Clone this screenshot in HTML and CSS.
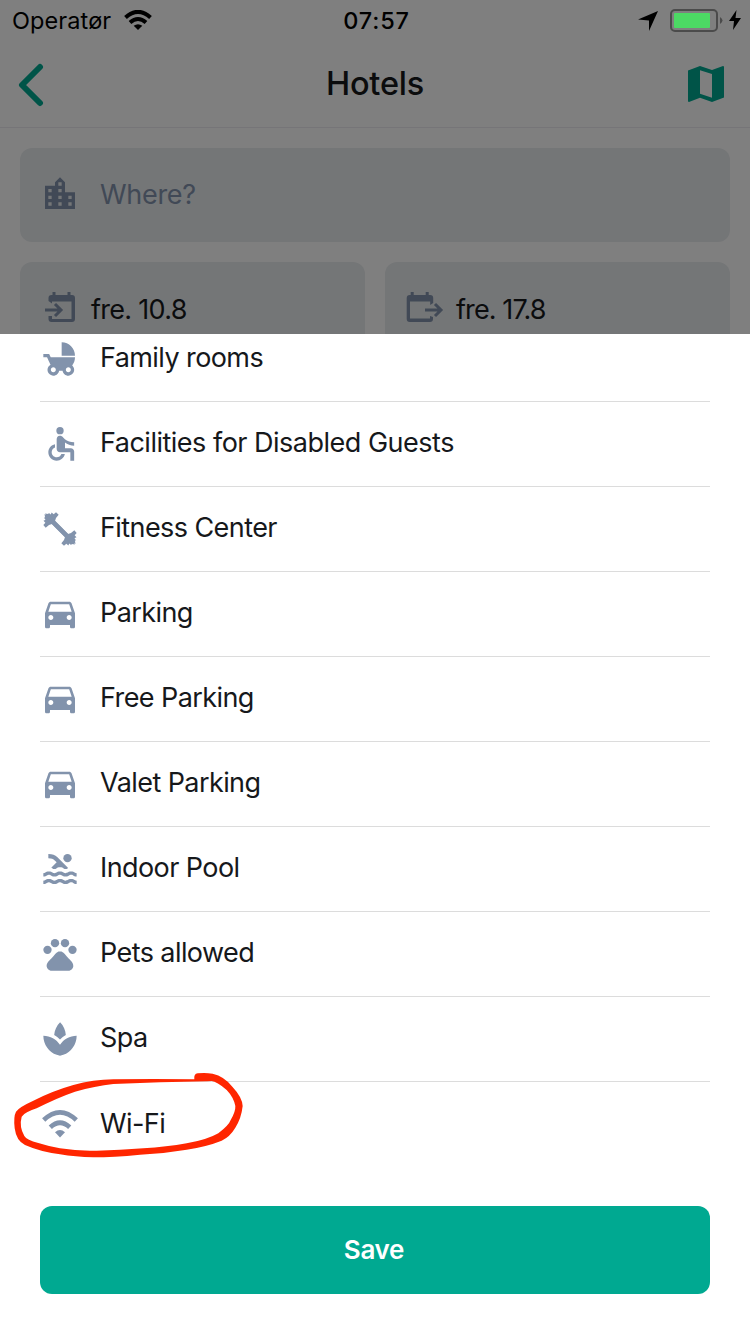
FILE: index.html
```html
<!DOCTYPE html>
<html lang="en">
<head>
<meta charset="utf-8">
<title>Hotels</title>
<link rel="stylesheet" href="styles.css">
</head>
<body>
<svg width="0" height="0" class="defs">
  <symbol id="car" viewBox="0 0 24 24"><path d="M18.92 5.01C18.72 4.42 18.16 4 17.5 4h-11c-.66 0-1.21.42-1.42 1.01L3 11v8c0 .55.45 1 1 1h1c.55 0 1-.45 1-1v-1h12v1c0 .55.45 1 1 1h1c.55 0 1-.45 1-1v-8l-2.08-5.99zM6.5 15c-.83 0-1.5-.67-1.5-1.5S5.67 12 6.5 12s1.5.67 1.5 1.5S7.33 15 6.5 15zm11 0c-.83 0-1.5-.67-1.5-1.5s.67-1.5 1.5-1.5 1.5.67 1.5 1.5-.67 1.5-1.5 1.5zM5 10l1.5-4.5h11L19 10H5z"/></symbol>
</svg>
<div class="screen">
  <main class="page">
    <header class="nav">
      <svg class="back" viewBox="0 0 30 46"><path d="M24 6L6 24l18 18"/></svg>
      <h1 class="title">Hotels</h1>
      <svg class="map" viewBox="0 0 36 36"><path fill-rule="evenodd" d="M0 4.500L12 0l12 4 11-4q1 0 1 1v30.500L24 36l-12-4.200L1 36q-1 0-1-1zM12 4.200v23.600l12 4V8z"/></svg>
    </header>
    <section class="search">
      <div class="field where">
        <svg class="icon" viewBox="0 0 24 24"><path d="M15 11V5l-3-3-3 3v2H3v14h18V11h-6zm-8 8H5v-2h2v2zm0-4H5v-2h2v2zm0-4H5V9h2v2zm6 8h-2v-2h2v2zm0-4h-2v-2h2v2zm0-4h-2V9h2v2zm0-4h-2V5h2v2zm6 12h-2v-2h2v2zm0-4h-2v-2h2v2z"/></svg>
        <span class="placeholder">Where?</span>
      </div>
      <div class="dates">
        <div class="field date">
          <svg class="cal" viewBox="0 0 40 34"><path d="M8.500 10V7q0-3 3-3h1V1h3v3h12V1h3v3h1.500q3 0 3 3v21q0 3-3 3h-20.500q-3 0-3-3v-3h3.500v3h19.500V10.500H12v2z"/><path class="line" d="M5 19h16M15 13l6 6-6 6"/></svg>
          <span class="day">fre. 10.8</span>
        </div>
        <div class="field date">
          <svg class="cal" viewBox="0 0 40 34"><path d="M1.700 7q0-3 3-3h1V1h3v3h12V1h3v3h1.500q3 0 3 3v5l-3 2v-3.500H5v17h20V25l3 1v2q0 3-3 3H4.700q-3 0-3-3z"/><path class="line" d="M20 19h16M30 13l6 6-6 6"/></svg>
          <span class="day out">fre. 17.8</span>
        </div>
      </div>
    </section>
  </main>
  <div class="dim"></div>
  <div class="status">
    <div class="carrier"><span class="operator">Operatør</span>
      <svg class="signal" viewBox="0 0 28 20"><path class="arc" d="M1.500 7.500Q14-3.800 26.500 7.500M6 12.500Q14 5.500 22 12.500"/><path d="M9.700 15.800Q14 12.500 18.300 15.800L14 20z"/></svg>
    </div>
    <span class="clock">07:57</span>
    <div class="power">
      <svg class="locate" viewBox="0 0 20 20"><path d="M20 0L11 20V9.500L0 8.500z"/></svg>
      <svg class="battery" viewBox="0 0 54 24"><rect class="shell" x="1" y="1" width="46" height="21" rx="4"/><rect class="charge" x="4" y="4" width="36" height="15" rx="1"/><path class="tip" d="M50 8q5 3.500 0 7z"/></svg>
      <svg class="bolt" viewBox="0 0 12 20"><path d="M7.500 0L0 11h5L4 20l8-12H6.500z"/></svg>
    </div>
  </div>
  <section class="sheet">
    <ul class="list">
      <li class="row"><svg class="icon" viewBox="0 0 24 24"><path d="M13 2v8h8c0-4.420-3.580-8-8-8zm6.320 13.890C20.370 14.540 21 12.840 21 11H6.440l-.95-2H2v2h2.220s1.890 4.070 2.120 4.420c-1.100.59-1.840 1.750-1.840 3.080C4.500 20.430 6.070 22 8 22c1.760 0 3.220-1.300 3.460-3h2.080c.24 1.700 1.700 3 3.460 3 1.930 0 3.500-1.570 3.500-3.500 0-1.040-.46-1.970-1.180-2.610zM8 20c-.83 0-1.500-.67-1.500-1.500S7.170 17 8 17s1.500.67 1.500 1.500S8.830 20 8 20zm9 0c-.83 0-1.500-.67-1.500-1.500s.67-1.500 1.500-1.500 1.500.67 1.500 1.500-.67 1.500-1.500 1.500z"/></svg><span class="label">Family rooms</span></li>
      <li class="row"><svg class="icon" viewBox="0 0 24 24"><circle cx="12" cy="4" r="2.200"/><path d="M20.500 13v-2c-2 .02-4.200-.75-5.570-1.830l-1.290-1.430c-.17-.19-.38-.34-.61-.45H13c-.35-.2-.75-.3-1.190-.26C10.760 7.110 10 8.040 10 9.090V15c0 1.100.9 2 2 2h6.200v5h2.300v-5.500c0-1.100-.9-2-2-2H15v-3.450c1.290 1.070 3.500 1.940 5.500 1.950zM12.830 18c-.41 1.160-1.520 2-2.830 2-1.660 0-3-1.340-3-3 0-1.310.84-2.410 2-2.830V12.100c-2.280.46-4 2.480-4 4.900 0 2.760 2.240 5 5 5 2.420 0 4.440-1.720 4.900-4h-2.070z"/></svg><span class="label wide">Facilities for Disabled Guests</span></li>
      <li class="row"><svg class="icon" viewBox="0 0 24 24"><path d="M3.400 3.400L3.200 2.600 4.300 3 5.600 2.600l.8.700.6-1.200 1.200 1.100L9.600 2l1.600 1.400-1.600 2L9 7.200l7.800 7.800 1.800-.6 2-1.600 1.400 1.600-1.200 1.400 1.100 1.200-1.200.6.700.8-.4 1.300.4 1.100-.8-.2z"/><path transform="matrix(0 1 1 0 0 0)" d="M3.400 3.400L3.200 2.600 4.300 3 5.600 2.600l.8.700.6-1.200 1.200 1.100L9.600 2l1.600 1.400-1.600 2L9 7.200l7.800 7.800 1.800-.6 2-1.600 1.400 1.600-1.200 1.400 1.100 1.200-1.200.6.700.8-.4 1.300.4 1.100-.8-.2z"/><path d="M3.300 3.300h2l15.400 15.400v2h-2L3.300 5.300z"/></svg><span class="label">Fitness Center</span></li>
      <li class="row"><svg class="icon car"><use href="#car"/></svg><span class="label">Parking</span></li>
      <li class="row"><svg class="icon car"><use href="#car"/></svg><span class="label">Free Parking</span></li>
      <li class="row"><svg class="icon car"><use href="#car"/></svg><span class="label">Valet Parking</span></li>
      <li class="row"><svg class="icon" viewBox="0 0 24 24"><path d="M22 21c-1.110 0-1.730-.37-2.180-.64-.37-.22-.6-.36-1.150-.36-.56 0-.78.13-1.150.36-.46.27-1.070.64-2.180.64s-1.730-.37-2.180-.64c-.37-.22-.6-.36-1.150-.36-.56 0-.78.13-1.150.36-.46.27-1.080.64-2.190.64-1.110 0-1.730-.37-2.180-.64-.37-.23-.6-.36-1.150-.36s-.78.13-1.150.36c-.46.27-1.080.64-2.190.64v-2c.56 0 .78-.13 1.150-.36.46-.27 1.080-.64 2.190-.64s1.730.37 2.180.64c.37.23.59.36 1.150.36.56 0 .78-.13 1.150-.36.46-.27 1.080-.64 2.190-.64 1.110 0 1.730.37 2.180.64.37.22.6.36 1.150.36s.78-.13 1.150-.36c.45-.27 1.070-.64 2.180-.64s1.730.37 2.180.64c.37.23.59.36 1.150.36v2zm0-4.500c-1.110 0-1.730-.37-2.180-.64-.37-.22-.6-.36-1.150-.36-.56 0-.78.13-1.150.36-.45.27-1.070.64-2.180.64s-1.730-.37-2.180-.64c-.37-.22-.6-.36-1.150-.36-.56 0-.78.13-1.150.36-.45.27-1.070.64-2.180.64s-1.730-.37-2.180-.64c-.37-.22-.6-.36-1.150-.36s-.78.13-1.150.36c-.47.27-1.090.64-2.200.64v-2c.56 0 .78-.13 1.150-.36.45-.27 1.070-.64 2.180-.64s1.730.37 2.180.64c.37.22.6.36 1.150.36.56 0 .78-.13 1.150-.36.45-.27 1.070-.64 2.180-.64s1.730.37 2.180.64c.37.22.6.36 1.150.36s.78-.13 1.150-.36c.45-.27 1.070-.64 2.180-.64s1.730.37 2.180.64c.37.22.6.36 1.150.36v2zM8.670 12c.56 0 .78-.13 1.150-.36.46-.27 1.080-.64 2.190-.64 1.110 0 1.730.37 2.180.64.37.22.6.36 1.150.36s.78-.13 1.150-.36c.12-.07.26-.15.41-.23L10.480 5C8.930 3.450 7.500 2.990 5 3v2.500c1.820-.01 2.890.39 4 1.500l1 1-3.250 3.250c.31.12.56.27.77.39.37.23.59.36 1.150.36z"/><circle cx="16.500" cy="5.500" r="2.500"/></svg><span class="label">Indoor Pool</span></li>
      <li class="row"><svg class="icon" viewBox="0 0 24 24"><circle cx="4.500" cy="9.500" r="2.500"/><circle cx="9" cy="5.500" r="2.500"/><circle cx="15" cy="5.500" r="2.500"/><circle cx="19.500" cy="9.500" r="2.500"/><path d="M17.340 14.860c-.87-1.020-1.600-1.890-2.480-2.910-.46-.54-1.050-1.080-1.750-1.320-.11-.04-.22-.07-.33-.09-.25-.04-.52-.04-.78-.04s-.53 0-.79.05c-.11.02-.22.05-.33.09-.7.24-1.280.78-1.750 1.320-.87 1.020-1.600 1.890-2.480 2.910-1.310 1.310-2.920 2.760-2.620 4.790.29 1.020 1.020 2.030 2.330 2.320h11.260c1.310-.29 2.040-1.310 2.330-2.320.31-2.040-1.300-3.490-2.610-4.800z"/></svg><span class="label">Pets allowed</span></li>
      <li class="row"><svg class="icon" viewBox="0 0 24 24"><path d="M15.490 9.630c-.18-2.790-1.310-5.510-3.430-7.630-2.140 2.140-3.320 4.860-3.550 7.630 1.280.68 2.460 1.560 3.490 2.630 1.030-1.060 2.210-1.940 3.490-2.630zM12 15.450C9.850 12.170 6.180 10 2 10c0 5.320 3.360 9.820 8.030 11.490.63.23 1.290.4 1.970.51.68-.12 1.330-.29 1.970-.51C18.640 19.820 22 15.320 22 10c-4.180 0-7.850 2.170-10 5.450z"/></svg><span class="label">Spa</span></li>
      <li class="row"><svg class="icon wifi" viewBox="0 0 40 40"><path class="arc" d="M3.700 15Q20-.3 36.300 15M10.300 22.300Q20 13.300 29.700 22.300"/><path d="M15 27.200Q20 22.800 25 27.200L20 32.500z"/></svg><span class="label">Wi-Fi</span></li>
    </ul>
    <button class="save">Save</button>
  </section>
  <svg class="scribble" viewBox="0 0 780 480"><path d="M583 208Q581 191 593 190Q615 187 638 191Q673 199 697 230Q727 262 728 288Q724 325 706 353Q690 380 665 392Q620 410 560 419Q490 431 420 434Q340 442 280 442Q225 441 180 433Q120 425 75 405Q49 393 44 355Q40 320 48 305Q56 292 100 272Q160 242 220 225Q280 209 340 208Q460 206 583 208ZM622 214Q480 216 340 222Q285 228 225 245Q170 264 110 295Q73 307 65 320Q57 350 73 378Q80 390 115 399Q150 410 180 415Q235 424 290 422Q360 421 430 415Q500 411 560 400Q620 390 655 370Q687 345 692 330Q707 305 706 288Q701 262 680 240Q650 214 635 213Z"/></svg>
</div>
</body>
</html>
```

FILE: styles.css
```css
* { box-sizing: border-box; }
body { margin: 0; font-family: Inter, "Liberation Sans", sans-serif; color: #16181b; }
.defs { position: absolute; }
.screen { position: relative; width: 750px; height: 1334px; overflow: hidden; background: #fff; }
svg { display: block; flex: none; }

.page { height: 334px; overflow: hidden; padding-top: 40px; }
.nav { height: 88px; display: grid; grid-template-columns: 1fr auto 1fr; align-items: center; padding: 0 26px 0 16px; border-bottom: 1px solid #eceaf0; }
.back { width: 30px; height: 46px; fill: none; stroke: #00a991; stroke-width: 6; stroke-linecap: round; stroke-linejoin: round; }
.title { margin: 0 -10px 0 0; font-size: 32.500px; font-weight: 500; letter-spacing: -0.2px; }
.map { width: 36px; height: 36px; fill: #00a991; justify-self: end; }

.search { display: flex; flex-direction: column; gap: 20px; padding: 20px; }
.field { display: flex; align-items: center; background: #e9ecef; border-radius: 12px; }
.where { height: 94px; padding: 0 20px 2px; gap: 20px; }
.icon { width: 40px; height: 40px; fill: #8293ac; }
.placeholder { font-size: 27px; letter-spacing: -0.3px; color: #8293ac; }
.dates { display: flex; gap: 20px; }
.date { flex: 1; height: 94px; padding: 0 20px; gap: 10px; }
.cal { width: 40px; height: 34px; margin-top: -2px; fill: #8293ac; }
.line { fill: none; stroke: #8293ac; stroke-width: 3; }
.day { font-size: 27px; letter-spacing: -0.7px; padding: 1px 0 0 1px; }
.out { letter-spacing: -0.9px; }

.dim { position: absolute; inset: 0; background: rgba(0, 0, 0, .5); }

.status { position: absolute; top: 0; left: 0; width: 750px; height: 40px; padding: 0 9px 0 12px; display: grid; grid-template-columns: 1fr auto 1fr; align-items: center; color: #000; font-size: 23.500px; }
.operator { letter-spacing: 0.1px; }
.carrier { display: flex; align-items: center; gap: 13px; }
.signal { width: 28px; height: 20px; }
.arc { fill: none; stroke: #000; stroke-width: 4; }
.clock { font-weight: 500; letter-spacing: 0.8px; }
.power { display: flex; align-items: center; justify-content: flex-end; }
.locate { width: 20px; height: 20px; margin-right: 12px; margin-top: 1px; }
.battery { width: 54px; height: 24px; margin-right: 5px; margin-top: 1px; }
.shell { fill: none; stroke: #4b4b4b; stroke-width: 2; }
.charge { fill: #4cd964; }
.tip { fill: #4b4b4b; }
.bolt { width: 12px; height: 20px; }

.sheet { position: absolute; left: 0; bottom: 0; width: 750px; height: 1000px; padding: 0 40px; background: #fff; overflow: hidden; }
.list { list-style: none; margin: -17px 0 39px; padding: 0; }
.row { height: 85px; display: flex; align-items: center; gap: 20px; border-bottom: 1px solid #dcdcdc; }
.row:last-child { border-bottom: 0; }
.car { margin-top: 2px; }
.label { font-size: 27px; line-height: 32px; margin-top: -2px; letter-spacing: -0.580px; white-space: nowrap; }
.wide { letter-spacing: -0.500px; }
.wifi .arc { stroke: #8293ac; stroke-width: 4.700; }
.save { display: block; width: 670px; height: 88px; padding: 0 2px 2px 0; border: 0; border-radius: 12px; background: #00a991; color: #fff; font-family: inherit; font-size: 26px; font-weight: 600; letter-spacing: -0.3px; }

.scribble { position: absolute; left: 0; top: 1010px; width: 260px; height: 160px; fill: #ff2600; }
```
